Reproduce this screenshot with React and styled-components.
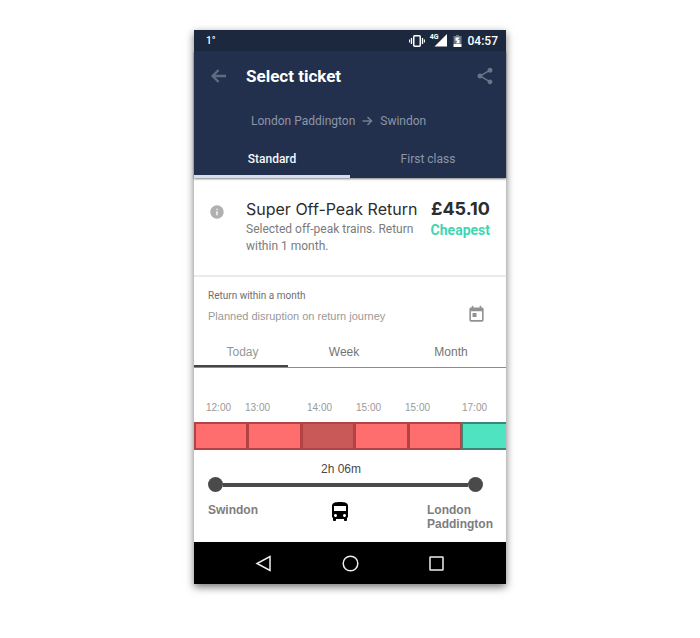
import React, { useState } from "react";
import styled, { createGlobalStyle } from "styled-components";
import {
  MdShare,
  MdInfo,
  MdToday,
  MdDirectionsBus,
} from "react-icons/md";

const GlobalStyle = createGlobalStyle`
  *, *::before, *::after { box-sizing: border-box; }
  body {
    margin: 0;
    background: #ffffff;
    font-family: Roboto, "Liberation Sans", sans-serif;
  }
  h1, h2, p, ol { margin: 0; padding: 0; }
  button { margin: 0; padding: 0; border: 0; background: none; font: inherit; color: inherit; cursor: pointer; }
  svg { display: block; }
`;

const Page = styled.main`
  display: flex;
  justify-content: center;
  padding: 30px 16px 54px;
`;

const Phone = styled.div`
  width: 100%;
  max-width: 312px;
  background: #ffffff;
  box-shadow: 0 3px 8px rgba(0, 0, 0, 0.55);
`;

const StatusBar = styled.div`
  display: flex;
  align-items: center;
  justify-content: space-between;
  height: 21px;
  padding: 0 8px 0 12px;
  background: #1b283e;
  color: #ffffff;
`;

const Temperature = styled.span`
  font: 500 10px/12px Roboto, sans-serif;
`;

const StatusIcons = styled.div`
  display: flex;
  align-items: center;
`;

const Network = styled.span`
  display: flex;
  margin: 0 6px 0 5px;
`;

const NetworkLabel = styled.span`
  font: 700 7px/8px Roboto, sans-serif;
  margin: -1px -5px 0 0;
`;

const Clock = styled.time`
  margin-left: 6px;
  font: 500 12px/16px Roboto, sans-serif;
`;

const Header = styled.header`
  background: #22304d;
  color: #ffffff;
  box-shadow: 0 1px 2px rgba(0, 0, 0, 0.5);
`;

const AppBar = styled.div`
  display: flex;
  align-items: center;
  height: 50px;
  padding: 0 11px 0 16px;
`;

const IconButton = styled.button`
  display: flex;
  color: ${(p) => p.$color};
`;

const Title = styled.h1`
  flex: 1;
  margin-left: 18px;
  font: 700 17px/24px Roboto, sans-serif;
`;

const Route = styled.p`
  display: flex;
  align-items: center;
  gap: 7px;
  height: 40px;
  padding-left: 57px;
  color: #8d96a6;
  font-size: 12px;
`;

const ClassTabs = styled.div`
  display: grid;
  grid-template-columns: 1fr 1fr;
`;

const ClassTab = styled.button`
  height: 37px;
  padding-top: 1px;
  border-bottom: 3px solid ${(p) => (p.$active ? "#d5def0" : "transparent")};
  color: ${(p) => (p.$active ? "#f4f6fa" : "#8d96a6")};
  font-size: 12px;
  font-weight: ${(p) => (p.$active ? 500 : 400)};
`;

const Ticket = styled.section`
  display: flex;
  justify-content: space-between;
  min-height: 99px;
  padding: 20px 16px 20px 15px;
  border-bottom: 2px solid #ebebeb;
`;

const InfoButton = styled(IconButton)`
  align-self: flex-start;
  margin-top: 6px;
`;

const TicketText = styled.div`
  flex: 1;
  margin-left: 21px;
`;

const TicketName = styled.h2`
  color: #2d2d2d;
  font: 400 16px/23px Inter, sans-serif;
  white-space: nowrap;
`;

const TicketNote = styled.p`
  color: #7b7b7b;
  font-size: 12px;
  line-height: 17px;
`;

const Price = styled.div`
  text-align: right;
`;

const Amount = styled.p`
  color: #2d2d2d;
  font: 700 18px/22px Inter, sans-serif;
`;

const Cheapest = styled.p`
  color: #3fd6b0;
  font-size: 14px;
  font-weight: 700;
  line-height: 20px;
`;

const Disruption = styled.section`
  display: flex;
  align-items: flex-end;
  justify-content: space-between;
  padding: 9px 20px 4px 14px;
`;

const DateButton = styled(IconButton)`
  padding-bottom: 2px;
`;

const Validity = styled.p`
  color: #6e6e6e;
  font-size: 10px;
  line-height: 20px;
`;

const Warning = styled.p`
  color: #999999;
  font: 400 11px/20px "Liberation Sans", sans-serif;
`;

const PeriodTabs = styled.div`
  display: grid;
  grid-template-columns: 94fr 112fr 106fr;
  margin-top: 6px;
  border-bottom: 1px solid #8c8c8c;
`;

const PeriodTab = styled.button`
  height: 31px;
  padding: ${(p) => p.$pad};
  border-bottom: 2px solid ${(p) => (p.$active ? "#454545" : "transparent")};
  color: ${(p) => (p.$active ? "#979797" : "#747474")};
  font: 400 12px/16px "Liberation Sans", sans-serif;
`;

const Hours = styled.div`
  display: grid;
  grid-template-columns: 39fr 62fr 49fr 49fr 57fr 44fr;
  margin-top: 32px;
  padding-left: 12px;
  color: #999999;
  font: 400 10px/16px "Liberation Sans", sans-serif;
`;

const Slots = styled.div`
  display: grid;
  grid-template-columns: repeat(5, 54fr) 45fr;
  margin-top: 6px;
`;

const slotColors = {
  busy: ["#ff6e6e", "#b34343"],
  selected: ["#c95858", "#b34343"],
  free: ["#50e3c2", "#3b8676"],
};

const Slot = styled.button`
  height: 28px;
  border: 2px solid ${(p) => slotColors[p.$kind][1]};
  border-right-width: ${(p) => (p.$kind === "free" ? 0 : 1)}px;
  background: ${(p) => slotColors[p.$kind][0]};
`;

const Journey = styled.section`
  padding: 11px 13px 11px 14px;
`;

const Duration = styled.p`
  padding-right: 19px;
  color: #4a4a4a;
  font: 400 12px/16px "Liberation Sans", sans-serif;
  text-align: center;
`;

const Track = styled.div`
  display: flex;
  align-items: center;
  margin-right: 10px;
`;

const Stop = styled.span`
  width: 15px;
  height: 15px;
  border-radius: 50%;
  background: #4a4a4a;
`;

const Line = styled.span`
  flex: 1;
  height: 4px;
  background: #4a4a4a;
`;

const Ends = styled.div`
  display: grid;
  grid-template-columns: 120fr 24px 141fr;
  margin-top: 11px;
  color: #7d7d7d;
  font: 700 12px/14px "Liberation Sans", sans-serif;
`;

const Destination = styled.span`
  justify-self: end;
`;

const BusIcon = styled(MdDirectionsBus)`
  margin-top: -3px;
  color: #000000;
`;

const NavBar = styled.nav`
  display: flex;
  align-items: center;
  justify-content: space-between;
  height: 42px;
  padding: 0 60px;
  background: #000000;
  color: #eeeeee;
`;

function Vibration() {
  return (
    <svg width="16" height="12" viewBox="0 0 16 12" fill="none" stroke="#fff">
      <rect x="4.75" y="0.75" width="6.5" height="10.5" rx="1" strokeWidth="1.5" />
      <path d="M2.5 3v6M13.5 3v6" strokeWidth="1.3" />
      <path d="M.6 4.5v3M15.4 4.5v3" strokeWidth="1.1" />
    </svg>
  );
}

function Signal() {
  return (
    <svg width="13" height="13" viewBox="0 0 13 13">
      <path d="M13 0v12.5H.5z" fill="#fff" />
    </svg>
  );
}

function Battery() {
  return (
    <svg width="9" height="12" viewBox="0 0 9 12">
      <path d="M3 0h3v1h2.5v8H.5V1H3z" fill="#6f7887" />
      <path d="M.5 9h8v3h-8z" fill="#fff" />
      <path d="M6.8 2.5H2.5v3.2h2L3 8.2h3.5V5H4.8z" fill="#fff" />
    </svg>
  );
}

function BackArrow() {
  return (
    <svg width="18" height="16" viewBox="0 0 18 16" fill="none" stroke="currentColor" strokeWidth="2.4">
      <path d="M16 8H3M8.6 2L2.6 8l6 6" />
    </svg>
  );
}

function RouteArrow() {
  return (
    <svg width="11" height="10" viewBox="0 0 11 10" fill="none" stroke="#727d90" strokeWidth="1.6">
      <path d="M.5 5h9M5.5 1l4 4-4 4" />
    </svg>
  );
}

const navItems = [
  { label: "Back", shape: <path d="M16 2.5v14L3 9.5z" /> },
  { label: "Home", shape: <circle cx="9.5" cy="9.5" r="7.3" /> },
  { label: "Recent apps", shape: <rect x="3" y="3" width="13" height="13" rx="0.5" /> },
];

const periods = [
  { name: "Today", pad: "3px 0 0 3px" },
  { name: "Week", pad: "3px 0 0" },
  { name: "Month", pad: "3px 4px 0 0" },
];

const hours = ["12:00", "13:00", "14:00", "15:00", "15:00", "17:00"];
const kinds = ["busy", "busy", "selected", "busy", "busy", "free"];

export default function App() {
  const [fare, setFare] = useState("Standard");
  const [period, setPeriod] = useState("Today");
  return (
    <>
      <GlobalStyle />
      <Page>
        <Phone>
          <StatusBar>
            <Temperature>1°</Temperature>
            <StatusIcons>
              <Vibration />
              <Network>
                <NetworkLabel>4G</NetworkLabel>
                <Signal />
              </Network>
              <Battery />
              <Clock>04:57</Clock>
            </StatusIcons>
          </StatusBar>
          <Header>
            <AppBar>
              <IconButton $color="#5f6b80" aria-label="Back">
                <BackArrow />
              </IconButton>
              <Title>Select ticket</Title>
              <IconButton $color="#6a7587" aria-label="Share">
                <MdShare size={20} />
              </IconButton>
            </AppBar>
            <Route>
              <span>London Paddington</span>
              <RouteArrow />
              <span>Swindon</span>
            </Route>
            <ClassTabs role="tablist" aria-label="Class">
              {["Standard", "First class"].map((name) => (
                <ClassTab
                  key={name}
                  role="tab"
                  aria-selected={fare === name}
                  $active={fare === name}
                  onClick={() => setFare(name)}
                >
                  {name}
                </ClassTab>
              ))}
            </ClassTabs>
          </Header>
          <Ticket>
            <InfoButton $color="#b0b0b0" aria-label="Ticket information">
              <MdInfo size={16} />
            </InfoButton>
            <TicketText>
              <TicketName>Super Off-Peak Return</TicketName>
              <TicketNote>
                Selected off-peak trains. Return
                <br />
                within 1 month.
              </TicketNote>
            </TicketText>
            <Price>
              <Amount>£45.10</Amount>
              <Cheapest>Cheapest</Cheapest>
            </Price>
          </Ticket>
          <Disruption>
            <div>
              <Validity>Return within a month</Validity>
              <Warning>Planned disruption on return journey</Warning>
            </div>
            <DateButton $color="#929292" aria-label="Choose date">
              <MdToday size={19} />
            </DateButton>
          </Disruption>
          <PeriodTabs role="tablist" aria-label="Period">
            {periods.map(({ name, pad }) => (
              <PeriodTab
                key={name}
                role="tab"
                aria-selected={period === name}
                $active={period === name}
                $pad={pad}
                onClick={() => setPeriod(name)}
              >
                {name}
              </PeriodTab>
            ))}
          </PeriodTabs>
          <Hours>
            {hours.map((hour, i) => (
              <span key={i}>{hour}</span>
            ))}
          </Hours>
          <Slots>
            {kinds.map((kind, i) => (
              <Slot key={i} $kind={kind} aria-label={`Trains at ${hours[i]}`} />
            ))}
          </Slots>
          <Journey>
            <Duration>2h 06m</Duration>
            <Track>
              <Stop />
              <Line />
              <Stop />
            </Track>
            <Ends>
              <span>Swindon</span>
              <BusIcon size={24} />
              <Destination>
                London
                <br />
                Paddington
              </Destination>
            </Ends>
          </Journey>
          <NavBar>
            {navItems.map(({ label, shape }) => (
              <IconButton key={label} $color="#eeeeee" aria-label={label}>
                <svg width="19" height="19" fill="none" stroke="currentColor" strokeWidth="1.5">
                  {shape}
                </svg>
              </IconButton>
            ))}
          </NavBar>
        </Phone>
      </Page>
    </>
  );
}
